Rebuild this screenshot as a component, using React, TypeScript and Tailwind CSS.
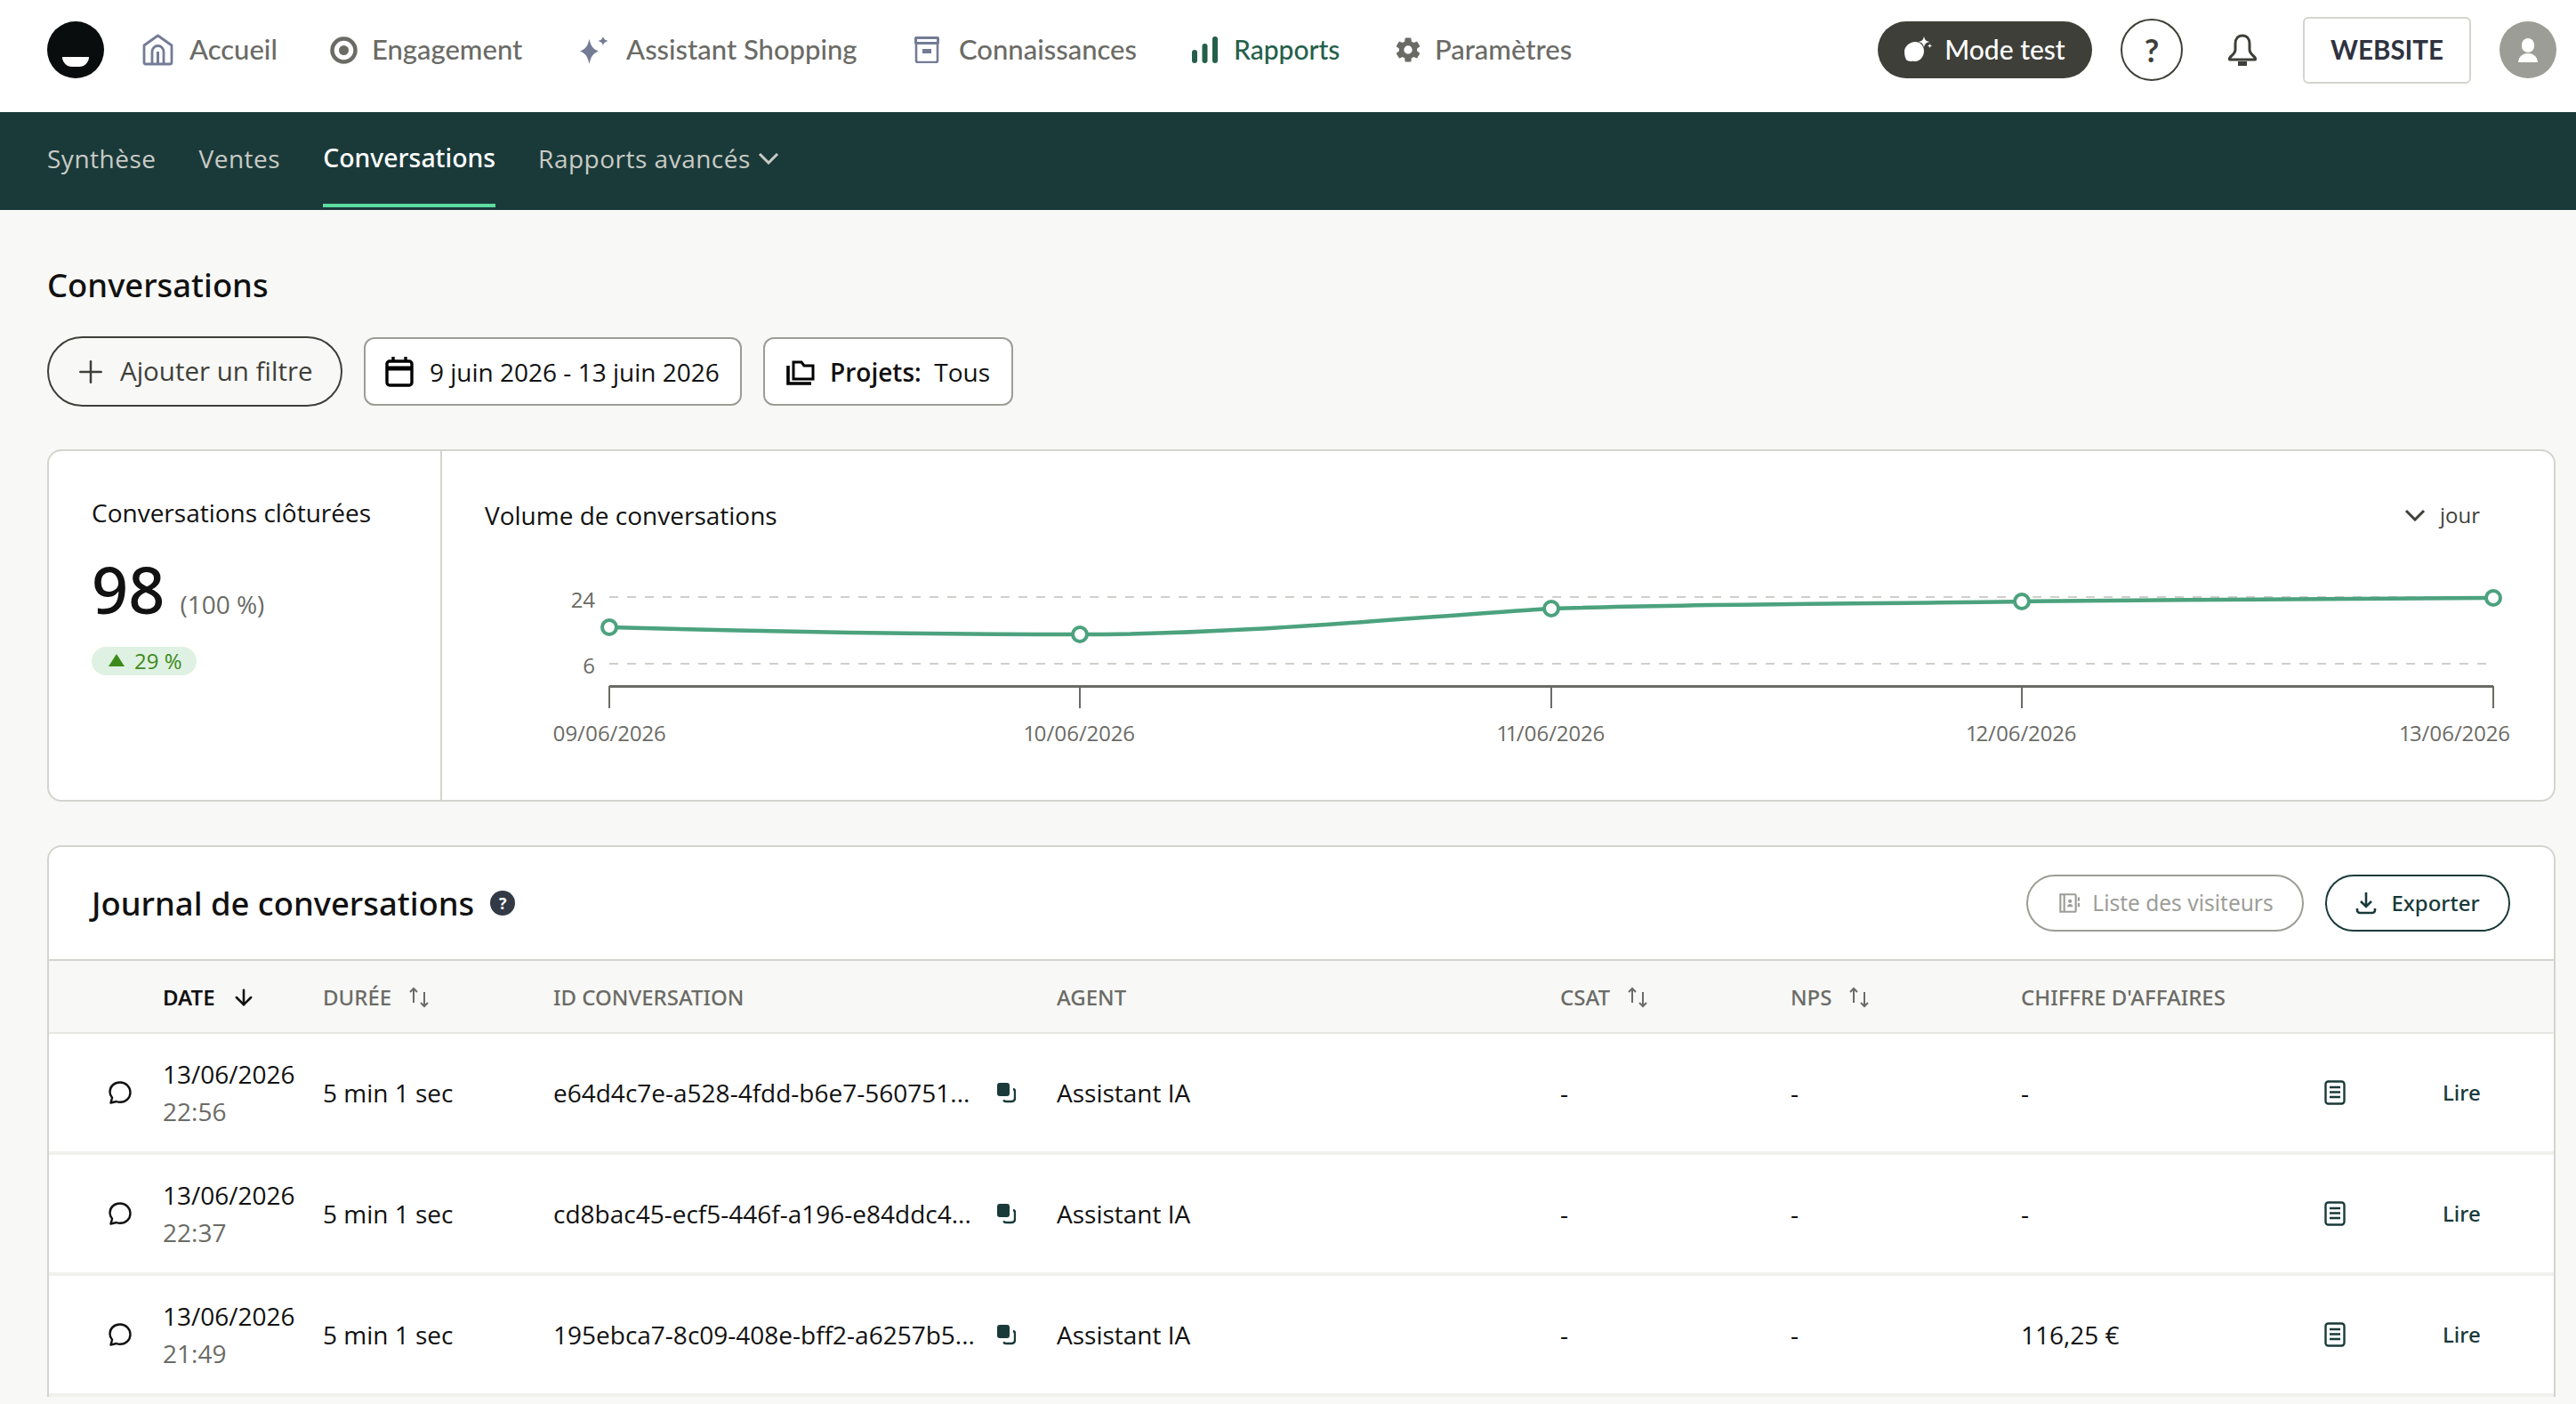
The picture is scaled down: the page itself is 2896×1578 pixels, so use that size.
import React from 'react';
import { Plus, ArrowDown } from 'lucide-react';
import { IoSettingsSharp } from 'react-icons/io5';
import { RiContactsBookLine } from 'react-icons/ri';

const sans = "font-['Open_Sans',sans-serif]";
const medium = "font-['Noto_Sans',sans-serif] font-medium";

function HomeIcon() {
  return (
    <svg width="35" height="36" viewBox="0 0 35 36" fill="none" stroke="#747b95" strokeWidth="2.800" strokeLinejoin="round">
      <path d="M2 13 17.500 2 33 13v19a2 2 0 0 1-2 2H4a2 2 0 0 1-2-2z" />
      <path d="M11 34V20a6.500 6.500 0 0 1 13 0v14" />
      <path d="M17.500 20v14" strokeWidth="3" />
    </svg>
  );
}

function TargetIcon() {
  return (
    <svg width="31" height="31" viewBox="0 0 31 31" fill="none">
      <circle cx="15.500" cy="15.500" r="13" stroke="#6b6b66" strokeWidth="4.500" />
      <circle cx="15.500" cy="15.500" r="5.500" fill="#6b6b66" />
    </svg>
  );
}

function SparkIcon() {
  return (
    <svg width="33" height="31" viewBox="0 0 33 31" fill="#747b95">
      <path d="M10.500 3c2 8 4 11 10.500 13.500C14.500 19 12.500 22.500 10.500 31 8.500 22.500 6.500 19 0 16.500 6.500 14 8.500 11 10.500 3z" />
      <path d="M26 0c1 3.200 2.400 4.200 6 5-3.600.8-5 2-6 5-1-3-2.400-4.200-6-5 3.600-.8 5-1.800 6-5z" />
    </svg>
  );
}

function ArchiveIcon() {
  return (
    <svg width="28" height="30" viewBox="0 0 28 30" fill="none">
      <rect x="0" y="0" width="28" height="9" rx="2" fill="#747b95" />
      <rect x="3" y="3" width="22" height="3" fill="#fff" />
      <path d="M2 8v19a2 2 0 0 0 2 2h20a2 2 0 0 0 2-2V8" stroke="#747b95" strokeWidth="2.600" />
      <rect x="9" y="14" width="10" height="5" fill="#747b95" />
    </svg>
  );
}

function BarsIcon() {
  return (
    <svg width="29" height="30" viewBox="0 0 29 30" fill="#255f4a">
      <rect x="0" y="15" width="6" height="15" rx="3" />
      <rect x="11.500" y="8" width="6" height="22" rx="3" />
      <rect x="23" y="0" width="6" height="30" rx="3" />
    </svg>
  );
}

function BellIcon() {
  return (
    <svg width="36" height="36" viewBox="0 0 36 36" fill="none" className="ml-[49px]">
      <path d="M18 2c-5 0-8 3.800-8 9v6.500c0 3-1.500 5-4.500 7.500-2 1.700-2.500 3.500-2 4h29c.5-.5 0-2.300-2-4-3-2.500-4.500-4.500-4.500-7.500V11c0-5.200-3-9-8-9z" stroke="#3f3f39" strokeWidth="3" strokeLinejoin="round" />
      <rect x="13" y="31" width="10" height="5" fill="#3f3f39" />
    </svg>
  );
}

function Chevron({ color, weight = 3 }: { color: string; weight?: number }) {
  return (
    <svg width="24" height="14" viewBox="0 0 24 14" fill="none" stroke={color} strokeWidth={weight}>
      <path d="M2 2l10 10L22 2" />
    </svg>
  );
}

function CopyIcon() {
  return (
    <svg width="22" height="24" viewBox="0 0 22 24" fill="none" className="shrink-0">
      <rect x="1" y="1" width="14" height="15" rx="3" fill="#1a3a3a" />
      <path d="M19 8c1.400.3 2 1.200 2 2.500V18c0 2.400-1.600 4-4 4h-6c-1.400 0-2.300-.6-2.800-1.800" stroke="#1a3a3a" strokeWidth="2.400" />
    </svg>
  );
}

function ChatIcon() {
  return (
    <svg width="28" height="28" viewBox="0 0 28 28" fill="none" stroke="#111" strokeWidth="2.400" strokeLinejoin="round">
      <path d="M14 2.500C7.500 2.500 2.500 7 2.500 13c0 2.600 1 5 2.600 6.800L3.500 25.500l6.300-1.500c1.300.5 2.700.8 4.200.8 6.500 0 11.500-4.800 11.500-11S20.500 2.500 14 2.500z" />
    </svg>
  );
}

function DocIcon() {
  return (
    <svg width="24" height="28" viewBox="0 0 24 28" fill="none" stroke="#1a3a3a" strokeWidth="2.400">
      <rect x="1.500" y="1.500" width="21" height="25" rx="3" />
      <path d="M6 8h12M6 13.500h12M6 19h12" strokeWidth="2.600" />
    </svg>
  );
}

const navItems = [
  { label: 'Accueil', icon: <HomeIcon />, gap: 'gap-[18px]', width: 'w-[211px]' },
  { label: 'Engagement', icon: <TargetIcon />, gap: 'gap-[16px]', width: 'w-[281px]' },
  { label: 'Assistant Shopping', icon: <SparkIcon />, gap: 'gap-[19px]', width: 'w-[376px]' },
  { label: 'Connaissances', icon: <ArchiveIcon />, gap: 'gap-[22px]', width: 'w-[312px]' },
  { label: 'Rapports', icon: <BarsIcon />, gap: 'gap-[18px]', width: 'w-[228px]', active: true },
  { label: 'Paramètres', icon: <IoSettingsSharp size={30} color="#6b6b66" />, gap: 'gap-[15px]', width: 'w-[200px]' },
];

function TopNav() {
  return (
    <header className="flex h-[126px] items-center bg-white pb-[14px] pl-[53px] pr-[22px]">
      <div className="relative mr-[43px] h-[64px] w-[64px] shrink-0 rounded-full bg-[#0a0d0d]">
        <div className="absolute left-[17px] top-[40px] h-[11px] w-[30px] rounded-b-full bg-white" />
      </div>
      <nav className="flex items-center font-['Lato',sans-serif] text-[31px] font-medium">
        {navItems.map((item) => (
          <div key={item.label} className={`flex items-center ${item.gap} ${item.width} ${item.active ? 'text-[#255f4a]' : 'text-[#6b6b66]'}`}>
            {item.icon}
            <span className={`mb-[2px] ${item.active ? 'text-[30px]' : ''}`}>{item.label}</span>
          </div>
        ))}
      </nav>
      <div className="ml-auto flex items-center font-['Lato',sans-serif]">
        <button className="flex h-[64px] w-[241px] items-center justify-center gap-[13px] rounded-full bg-[#3f3f39] pb-[2px] text-[30px] font-medium text-white">
          <svg width="32" height="28" viewBox="0 0 32 28" fill="#fff">
            <path d="M12 6c6 0 10 4.500 10 10.500S17.500 28 12 28c-1.500 0-3-.5-4.500 0C6 27.500 3 27.500 2 26 .500 23 0 20 0 17 0 11 6 6 12 6z" />
            <path d="M22 0c1 4 2.200 5 6 6-3.800 1-5 2.200-6 6-1-3.800-2.200-5-6-6 3.800-1 5-2 6-6z" />
            <path d="M28.500 8c.4 1.700 1 2.100 3 2.500-2 .4-2.600 1-3 2.500-.4-1.500-1-2.100-3-2.500 2-.4 2.600-.8 3-2.500z" />
          </svg>
          Mode test
        </button>
        <div className="ml-[32px] flex h-[70px] w-[70px] items-center justify-center rounded-full border-2 border-[#3f3f39] text-[36px] font-bold text-[#3f3f39]">?</div>
        <BellIcon />
        <button className="ml-[50px] flex h-[75px] w-[189px] items-center justify-center rounded-[6px] border-2 border-[#d4d4ce] text-[29.5px] font-bold text-[#2e3340]">WEBSITE</button>
        <div className="relative ml-[32px] h-[64px] w-[64px] overflow-hidden rounded-full bg-[#9d9d97]">
          <div className="absolute left-[25px] top-[19px] h-[16px] w-[14px] rounded-full bg-white" />
          <div className="absolute left-[21px] top-[36px] h-[10px] w-[22px] rounded-t-full bg-white" />
        </div>
      </div>
    </header>
  );
}

function SubNav() {
  return (
    <div className={`flex h-[110px] items-stretch gap-[48px] bg-[#1a3a3a] px-[53px] pb-[3px] text-[28px] tracking-[0.5px] text-[#c9cbc5] ${sans}`}>
      <div className="flex items-center border-b-4 border-transparent">Synthèse</div>
      <div className="flex items-center border-b-4 border-transparent">Ventes</div>
      <div className={`flex items-center border-b-4 border-[#5fdc9f] text-[28.4px] tracking-normal text-white ${medium}`}>Conversations</div>
      <div className="flex items-center gap-[8px] border-b-4 border-transparent">
        Rapports avancés
        <Chevron color="#c9cbc5" />
      </div>
    </div>
  );
}

function FilterBar() {
  return (
    <div className="mt-[36px] flex items-center gap-[24px] text-[28px]">
      <button className="flex h-[79px] w-[332px] items-center gap-[13px] rounded-full border-2 border-[#3f3f39] pl-[27px] text-[29.5px] text-[#3f3f39]">
        <Plus size={40} strokeWidth={1.500} />
        Ajouter un filtre
      </button>
      <button className="flex h-[77px] w-[425px] items-center gap-[18px] rounded-[12px] border-2 border-[#9d9d97] bg-white pl-[22px] text-[#111]">
        <svg width="32" height="34" viewBox="0 0 32 34" fill="none" stroke="#000" strokeWidth="3.400">
          <rect x="2" y="5" width="28" height="27" rx="3" />
          <path d="M2 13h28" strokeWidth="5" />
          <path d="M9 0v6M23 0v6" />
        </svg>
        9 juin 2026 - 13 juin 2026
      </button>
      <button className="flex h-[77px] w-[281px] items-center gap-[17px] rounded-[12px] border-2 border-[#9d9d97] bg-white pl-[24px] text-[#111]">
        <svg width="32" height="30" viewBox="0 0 32 30" fill="none" stroke="#000" strokeWidth="3">
          <path d="M8 4h9l3 4h10v15H8z" />
          <path d="M2 8v20h26" strokeWidth="3.600" />
        </svg>
        <span><span className="font-semibold">Projets:</span>&nbsp; Tous</span>
      </button>
    </div>
  );
}

const pts = [
  [685, 705],
  [1214, 713],
  [1744, 684],
  [2273, 676],
  [2803, 672],
];

function Chart() {
  // the svg origin sits at page x=497, y=620
  return (
    <svg width="2374" height="240" viewBox="497 620 2374 240" className="block">
      <g stroke="#cfcfca" strokeWidth="2" strokeDasharray="10 10">
        <path d="M685 671H2797" />
        <path d="M685 746H2797" />
      </g>
      <g fill="#6b6b66" fontSize="24" fontFamily="Open Sans" className="proportional-nums">
        <text x="669" y="683" textAnchor="end">24</text>
        <text x="669" y="757" textAnchor="end">6</text>
        <text x="685" y="833" textAnchor="middle">09/06/2026</text>
        <text x="1214" y="833" textAnchor="middle">10/06/2026</text>
        <text x="1744" y="833" textAnchor="middle">11/06/2026</text>
        <text x="2273" y="833" textAnchor="middle">12/06/2026</text>
        <text x="2822" y="833" textAnchor="end">13/06/2026</text>
      </g>
      <path d="M685 771.500H2803" stroke="#6b6b66" strokeWidth="3" fill="none" />
      <path d="M685 771v25M1214 771v25M1744 771v25M2273 771v25M2803 771v25" stroke="#6b6b66" strokeWidth="2" fill="none" />
      <path
        d="M685 705C860 710 1040 713 1214 713C1390 713 1560 696 1744 684C1920 678 2100 679 2273 676C2450 674 2620 673 2803 672"
        fill="none"
        stroke="#4ca27e"
        strokeWidth="4.500"
      />
      {pts.map(([x, y]) => (
        <circle key={x} cx={x} cy={y} r="8" fill="#fff" stroke="#4ca27e" strokeWidth="4" />
      ))}
    </svg>
  );
}

function StatsCard() {
  return (
    <section className="mt-[48px] flex h-[396px] overflow-hidden rounded-[16px] border-2 border-[#d4d4ce] bg-white">
      <div className="w-[442px] shrink-0 border-r-2 border-[#d4d4ce] pl-[48px] pt-[50px]">
        <div className="text-[28px] leading-[38px] text-[#111]">Conversations clôturées</div>
        <div className="mt-[18px] flex items-baseline gap-[17px]">
          <span className={`text-[72px] leading-[98px] text-[#111] ${medium}`}>98</span>
          <span className="text-[28px] text-[#6b6b66]">(100 %)</span>
        </div>
        <div className="mt-[16px] flex h-[32px] w-[118px] items-center gap-[11px] rounded-full bg-[#dff1e3] pl-[19px] text-[24px] text-[#3d8a1a]">
          <span className="mb-[3px] h-0 w-0 border-x-[9px] border-b-[14px] border-x-transparent border-b-[#3d8a1a]" />
          29 %
        </div>
      </div>
      <div className="flex-1">
        <div className="flex h-[113px] items-start justify-between pl-[48px] pr-[83px] pt-[53px]">
          <div className="text-[28px] leading-[38px] text-[#111]">Volume de conversations</div>
          <div className="flex items-center gap-[16px] text-[24px] leading-[38px] text-[#3f3f39]">
            <Chevron color="#3f3f39" />
            jour
          </div>
        </div>
        <Chart />
      </div>
    </section>
  );
}

const cols = 'grid grid-cols-[128px_180px_259px_566px_566px_259px_259px_353px_1fr]';

const rows = [
  { date: '13/06/2026', time: '22:56', id: 'e64d4c7e-a528-4fdd-b6e7-560751...', ca: '-' },
  { date: '13/06/2026', time: '22:37', id: 'cd8bac45-ecf5-446f-a196-e84ddc4...', ca: '-' },
  { date: '13/06/2026', time: '21:49', id: '195ebca7-8c09-408e-bff2-a6257b5...', ca: '116,25 €' },
];

function SortIcon() {
  return (
    <svg width="26" height="24" viewBox="0 0 26 24" fill="none" stroke="#6b6b66" strokeWidth="2">
      <path d="M7 18V2M3 6l4-4 4 4" />
      <path d="M19 6v16M15 18l4 4 4-4" />
    </svg>
  );
}

function Journal() {
  return (
    <section className="mt-[49px] overflow-hidden rounded-t-[16px] border-2 border-b-0 border-[#d4d4ce] bg-white">
      <div className="flex h-[128px] items-center border-b-2 border-[#d4d4ce] pl-[48px] pr-[49px]">
        <h2 className={`text-[36.4px] text-[#111] ${medium}`}>Journal de conversations</h2>
        <span className="ml-[18px] flex h-[28px] w-[28px] items-center justify-center rounded-full bg-[#333a45] text-[18px] font-bold text-white">?</span>
        <button className="ml-auto flex h-[64px] w-[312px] items-center justify-center gap-[14px] rounded-full border-2 border-[#9d9d97] font-['Noto_Sans',sans-serif] text-[24.5px] text-[#9d9d97]">
          <RiContactsBookLine size={26} />
          Liste des visiteurs
        </button>
        <button className={`ml-[24px] flex h-[64px] w-[208px] items-center justify-center gap-[16px] rounded-full border-2 border-[#1a3a3a] text-[24px] text-[#1a3a3a] ${medium}`}>
          <svg width="24" height="26" viewBox="0 0 24 26" fill="none" stroke="#1a3a3a" strokeWidth="2.600">
            <path d="M12 1v15M6 11l6 6 6-6" />
            <path d="M2 19v2a3 3 0 0 0 3 3h14a3 3 0 0 0 3-3v-2" />
          </svg>
          Exporter
        </button>
      </div>
      <div className={`${cols} h-[82px] items-center border-b-2 border-[#e6e6e2] bg-[#f8f8f6] pt-[2px] text-[24px] text-[#6b6b66] ${medium}`}>
        <div />
        <div className="flex items-center gap-[18px] font-semibold text-[#111]">
          DATE
          <ArrowDown size={28} strokeWidth={2.200} />
        </div>
        <div className="flex items-center gap-[18px]">
          DURÉE
          <SortIcon />
        </div>
        <div>ID CONVERSATION</div>
        <div>AGENT</div>
        <div className="flex items-center gap-[18px]">
          CSAT
          <SortIcon />
        </div>
        <div className="flex items-center gap-[18px]">
          NPS
          <SortIcon />
        </div>
        <div className="col-span-2">CHIFFRE D'AFFAIRES</div>
      </div>
      {rows.map((r) => (
        <div key={r.id} className={`${cols} h-[136px] items-center border-b-4 border-[#f0f0ec] text-[28px] text-[#111]`}>
          <div className="flex justify-end pr-[34px]">
            <ChatIcon />
          </div>
          <div className="leading-[42px]">
            <div>{r.date}</div>
            <div className="text-[#6b6b66]">{r.time}</div>
          </div>
          <div>5 min 1 sec</div>
          <div className="flex items-center justify-between pr-[46px]">
            <span className="whitespace-nowrap">{r.id}</span>
            <CopyIcon />
          </div>
          <div>Assistant IA</div>
          <div>-</div>
          <div>-</div>
          <div>{r.ca}</div>
          <div className="flex items-center">
            <span className="-translate-x-[12px]">
              <DocIcon />
            </span>
            <span className={`ml-[97px] text-[24px] text-[#1a3a3a] ${medium}`}>Lire</span>
          </div>
        </div>
      ))}
    </section>
  );
}

export default function App() {
  return (
    <div className={`h-[1578px] overflow-hidden bg-[#f8f8f6] ${sans}`}>
      <TopNav />
      <SubNav />
      <main className="pl-[53px] pr-[23px] pt-[62px]">
        <h1 className={`text-[36.4px] leading-[44px] text-[#111] ${medium}`}>Conversations</h1>
        <FilterBar />
        <StatsCard />
        <Journal />
      </main>
    </div>
  );
}
